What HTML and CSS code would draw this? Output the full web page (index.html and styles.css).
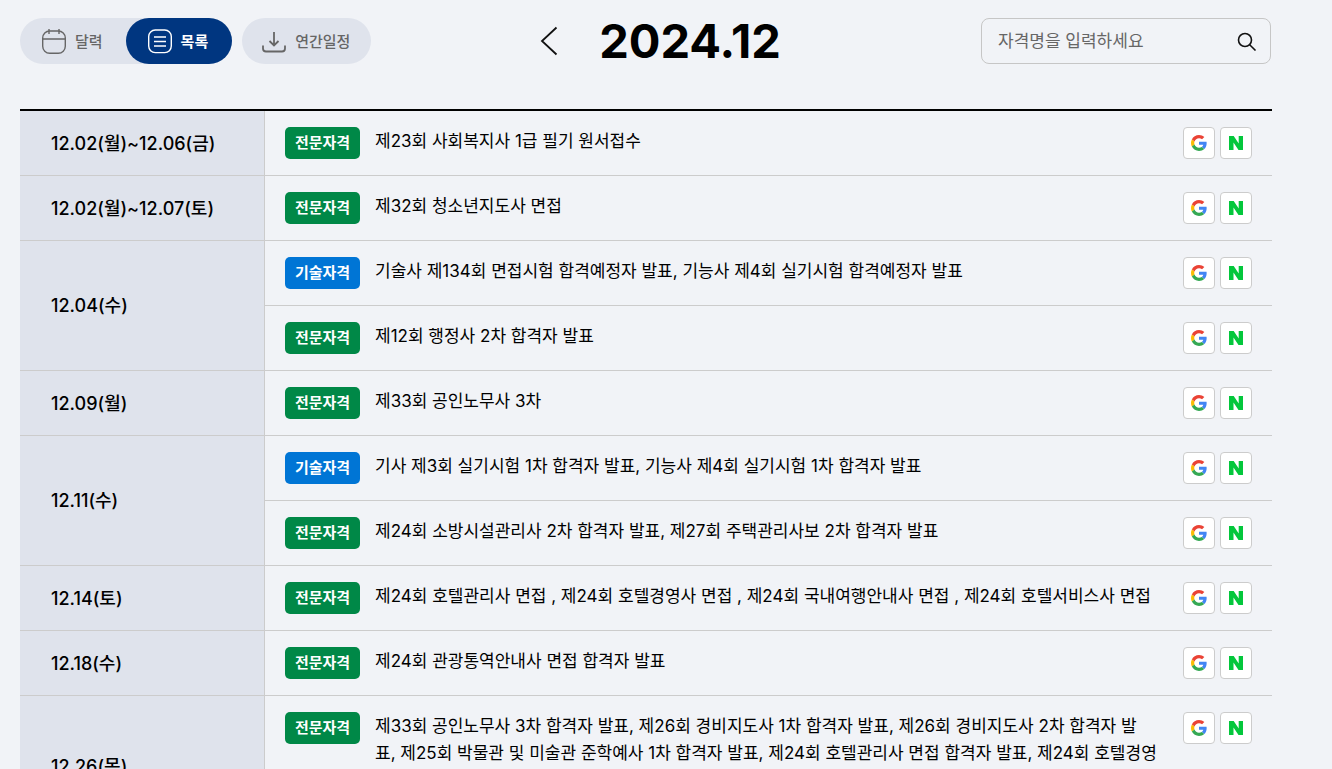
FILE: index.html
```
<!DOCTYPE html>
<html lang="ko">
<head>
    <meta charset="UTF-8">
    <meta name="viewport" content="width=device-width, initial-scale=1">
    <title>시험일정 2024.12</title>
    <link rel="stylesheet" href="styles.css">
</head>
<body>
    <!-- shared icons -->
    <svg class="sprite" aria-hidden="true">
        <symbol id="google" viewBox="0 0 48 48">
            <path fill="#EA4335" d="M24 9.5c3.54 0 6.71 1.22 9.21 3.6l6.85-6.85C35.9 2.38 30.47 0 24 0 14.62 0 6.51 5.38 2.56 13.22l7.98 6.19C12.43 13.72 17.74 9.5 24 9.5z"/>
            <path fill="#4285F4" d="M46.98 24.55c0-1.57-.15-3.09-.38-4.55H24v9.02h12.94c-.58 2.96-2.26 5.48-4.78 7.18l7.73 6c4.51-4.18 7.09-10.36 7.09-17.65z"/>
            <path fill="#FBBC05" d="M10.53 28.59c-.48-1.45-.76-2.99-.76-4.59s.27-3.14.76-4.59l-7.98-6.19C.92 16.46 0 20.12 0 24c0 3.88.92 7.54 2.56 10.78l7.97-6.19z"/>
            <path fill="#34A853" d="M24 48c6.48 0 11.93-2.13 15.89-5.81l-7.73-6c-2.15 1.45-4.92 2.3-8.16 2.3-6.26 0-11.57-4.22-13.47-9.91l-7.98 6.19C6.51 42.62 14.62 48 24 48z"/>
        </symbol>
        <symbol id="naver" viewBox="0 0 16 16">
            <path fill="#03C73C" d="M1 1h4.700l5 7.500V1H15v14h-4.500L5.500 7.500V15H1z"/>
        </symbol>
    </svg>

    <header class="top">
        <div class="views">
            <div class="toggle">
                <button type="button" class="pill">
                    <svg class="icon" viewBox="0 0 26 26" aria-hidden="true"><rect x="1.700" y="3" width="22.600" height="22.300" rx="7"/><path d="M1.700 11h22.600M8 1v5M18 1v5"/></svg>
                    달력
                </button>
                <button type="button" class="pill active">
                    <svg class="icon" viewBox="0 0 26 26" aria-hidden="true"><rect x="1.700" y="2" width="22.600" height="22.600" rx="6.500"/><path d="M7 9h12M7 13.500h12M7 18h12"/></svg>
                    목록
                </button>
            </div>
            <button type="button" class="pill year">
                <svg class="icon bold" viewBox="0 0 26 26" aria-hidden="true"><path d="M13 4v13.500M8.500 13l4.500 4.500 4.500-4.500M2 17.500v3q0 3 3 3h16q3 0 3-3v-3"/></svg>
                연간일정
            </button>
        </div>
        <div class="month">
            <button type="button" class="prev" aria-label="이전 달">
                <svg viewBox="0 0 20 32" aria-hidden="true"><path d="M17.500 2.500 3 16l14.500 13.500"/></svg>
            </button>
            <h1>2024.12</h1>
        </div>
        <form class="search">
            <input type="text" placeholder="자격명을 입력하세요" aria-label="자격명">
            <button type="submit" aria-label="검색">
                <svg viewBox="0 0 20 20" aria-hidden="true"><circle cx="8" cy="9" r="6.500"/><path d="m12.700 13.700 5.800 5.800"/></svg>
            </button>
        </form>
    </header>

    <table class="schedule">
        <tbody>
            <tr>
                <th scope="row">12.02(월)~12.06(금)</th>
                <td><div class="item">
                    <span class="badge pro">전문자격</span>
                    <p>제23회 사회복지사 1급 필기 원서접수</p>
                    <a href="#" aria-label="구글 캘린더"><svg><use href="#google"/></svg></a>
                    <a href="#" aria-label="네이버 캘린더"><svg><use href="#naver"/></svg></a>
                </div></td>
            </tr>
            <tr>
                <th scope="row">12.02(월)~12.07(토)</th>
                <td><div class="item">
                    <span class="badge pro">전문자격</span>
                    <p>제32회 청소년지도사 면접</p>
                    <a href="#" aria-label="구글 캘린더"><svg><use href="#google"/></svg></a>
                    <a href="#" aria-label="네이버 캘린더"><svg><use href="#naver"/></svg></a>
                </div></td>
            </tr>
            <tr>
                <th scope="row" rowspan="2">12.04(수)</th>
                <td><div class="item">
                    <span class="badge tech">기술자격</span>
                    <p>기술사 제134회 면접시험 합격예정자 발표, 기능사 제4회 실기시험 합격예정자 발표</p>
                    <a href="#" aria-label="구글 캘린더"><svg><use href="#google"/></svg></a>
                    <a href="#" aria-label="네이버 캘린더"><svg><use href="#naver"/></svg></a>
                </div></td>
            </tr>
            <tr>
                <td><div class="item">
                    <span class="badge pro">전문자격</span>
                    <p>제12회 행정사 2차 합격자 발표</p>
                    <a href="#" aria-label="구글 캘린더"><svg><use href="#google"/></svg></a>
                    <a href="#" aria-label="네이버 캘린더"><svg><use href="#naver"/></svg></a>
                </div></td>
            </tr>
            <tr>
                <th scope="row">12.09(월)</th>
                <td><div class="item">
                    <span class="badge pro">전문자격</span>
                    <p>제33회 공인노무사 3차</p>
                    <a href="#" aria-label="구글 캘린더"><svg><use href="#google"/></svg></a>
                    <a href="#" aria-label="네이버 캘린더"><svg><use href="#naver"/></svg></a>
                </div></td>
            </tr>
            <tr>
                <th scope="row" rowspan="2">12.11(수)</th>
                <td><div class="item">
                    <span class="badge tech">기술자격</span>
                    <p>기사 제3회 실기시험 1차 합격자 발표, 기능사 제4회 실기시험 1차 합격자 발표</p>
                    <a href="#" aria-label="구글 캘린더"><svg><use href="#google"/></svg></a>
                    <a href="#" aria-label="네이버 캘린더"><svg><use href="#naver"/></svg></a>
                </div></td>
            </tr>
            <tr>
                <td><div class="item">
                    <span class="badge pro">전문자격</span>
                    <p>제24회 소방시설관리사 2차 합격자 발표, 제27회 주택관리사보 2차 합격자 발표</p>
                    <a href="#" aria-label="구글 캘린더"><svg><use href="#google"/></svg></a>
                    <a href="#" aria-label="네이버 캘린더"><svg><use href="#naver"/></svg></a>
                </div></td>
            </tr>
            <tr>
                <th scope="row">12.14(토)</th>
                <td><div class="item">
                    <span class="badge pro">전문자격</span>
                    <p>제24회 호텔관리사 면접 , 제24회 호텔경영사 면접 , 제24회 국내여행안내사 면접 , 제24회 호텔서비스사 면접</p>
                    <a href="#" aria-label="구글 캘린더"><svg><use href="#google"/></svg></a>
                    <a href="#" aria-label="네이버 캘린더"><svg><use href="#naver"/></svg></a>
                </div></td>
            </tr>
            <tr>
                <th scope="row">12.18(수)</th>
                <td><div class="item">
                    <span class="badge pro">전문자격</span>
                    <p>제24회 관광통역안내사 면접 합격자 발표</p>
                    <a href="#" aria-label="구글 캘린더"><svg><use href="#google"/></svg></a>
                    <a href="#" aria-label="네이버 캘린더"><svg><use href="#naver"/></svg></a>
                </div></td>
            </tr>
            <tr>
                <th scope="row">12.26(목)</th>
                <td><div class="item">
                    <span class="badge pro">전문자격</span>
                    <p>제33회 공인노무사 3차 합격자 발표, 제26회 경비지도사 1차 합격자 발표, 제26회 경비지도사 2차 합격자 발표, 제25회 박물관 및 미술관 준학예사 1차 합격자 발표, 제24회 호텔관리사 면접 합격자 발표, 제24회 호텔경영사 면접 합격자 발표, 제24회 국내여행안내사 면접 합격자 발표, 제24회 호텔서비스사 면접 합격자 발표, 제12회 행정사 2차 합격자 발표</p>
                    <a href="#" aria-label="구글 캘린더"><svg><use href="#google"/></svg></a>
                    <a href="#" aria-label="네이버 캘린더"><svg><use href="#naver"/></svg></a>
                </div></td>
            </tr>
        </tbody>
    </table>
</body>
</html>
```
FILE: styles.css
```
* {
    box-sizing: border-box;
}

body {
    margin: 0;
    padding: 18px 60px 40px 20px;
    background: #f1f3f7;
    color: #000;
    font-family: Inter, "Noto Sans CJK KR", sans-serif;
    font-size: 17px;
    line-height: 27px;
}

button, input {
    font: inherit;
    color: inherit;
    border: 0;
    background: none;
    padding: 0;
}

button {
    cursor: pointer;
}

.sprite {
    display: none;
}

.top {
    display: grid;
    grid-template-columns: 1fr auto 1fr;
    align-items: center;
    margin-bottom: 45px;
}

.views {
    display: flex;
    gap: 10px;
}

.toggle {
    display: flex;
    border-radius: 23px;
    background: #dfe3ec;
}

.pill {
    display: flex;
    align-items: center;
    gap: 8px;
    height: 46px;
    padding: 0 23px 0 21px;
    border-radius: 23px;
    color: #666;
    font-size: 15px;
    font-weight: 500;
}

.pill.active {
    padding-right: 24px;
    background: #003680;
    color: #fff;
    font-weight: 700;
}

.pill.year {
    padding: 0 21px 0 19px;
    background: #dfe3ec;
}

.icon {
    width: 26px;
    height: 26px;
    fill: none;
    stroke: currentColor;
    stroke-width: 1.4;
}

.icon.bold {
    stroke-width: 1.8;
}

.month {
    display: flex;
    align-items: center;
    gap: 12px;
}

.month h1 {
    margin: 0;
    font-size: 47px;
    line-height: 46px;
    font-weight: 700;
}

.prev {
    display: flex;
    justify-content: center;
    width: 76px;
}

.prev svg {
    width: 20px;
    height: 32px;
    fill: none;
    stroke: #111;
    stroke-width: 1.8;
}

.search {
    display: flex;
    align-items: center;
    justify-self: end;
    width: 290px;
    height: 46px;
    margin-right: 1px;
    padding: 0 13px 0 16px;
    border: 1px solid #c6c6c6;
    border-radius: 8px;
}

.search input {
    flex: 1;
    min-width: 0;
    outline: 0;
}

.search input::placeholder {
    color: #666;
}

.search button {
    display: flex;
}

.search svg {
    width: 20px;
    height: 20px;
    fill: none;
    stroke: #111;
    stroke-width: 1.6;
}

.schedule {
    width: 100%;
    border-top: 2px solid #000;
    border-spacing: 0;
}

.schedule th, .schedule td {
    border-bottom: 1px solid #ccc;
}

.schedule th {
    width: 245px;
    padding: 0 31px;
    border-right: 1px solid #ccc;
    background: #dfe3ec;
    font-size: 18px;
    font-weight: 500;
    text-align: left;
    white-space: nowrap;
}

.schedule td {
    padding: 16px 20px;
}

.item {
    display: flex;
    align-items: flex-start;
    gap: 5px;
}

.item p {
    flex: 1;
    margin: 1px 21px 0 10px;
}

.item a {
    display: flex;
    align-items: center;
    justify-content: center;
    width: 32px;
    height: 32px;
    border: 1px solid #ccc;
    border-radius: 4px;
    background: #fff;
}

.item a svg {
    width: 16px;
    height: 16px;
}

.badge {
    width: 75px;
    height: 32px;
    border-radius: 5px;
    color: #fff;
    font-size: 15px;
    font-weight: 600;
    line-height: 31px;
    text-align: center;
}

.badge.pro {
    background: #008847;
}

.badge.tech {
    background: #0075d5;
}
```
